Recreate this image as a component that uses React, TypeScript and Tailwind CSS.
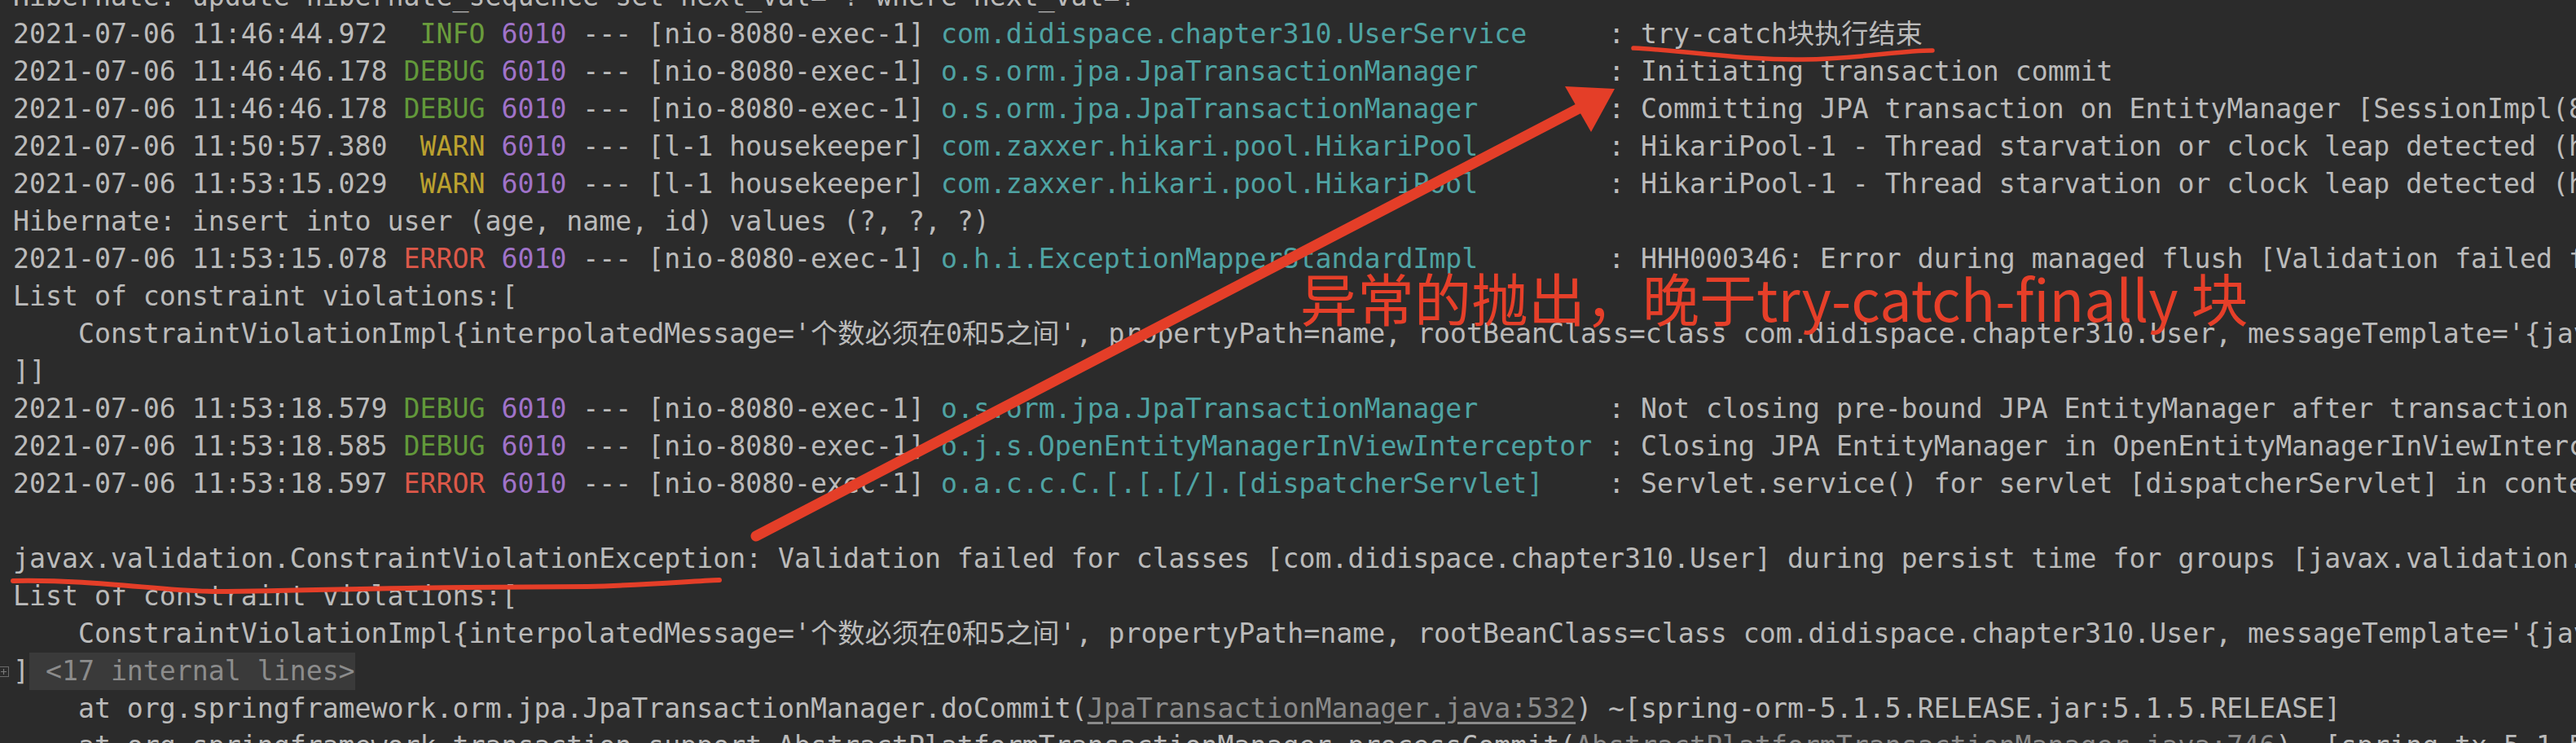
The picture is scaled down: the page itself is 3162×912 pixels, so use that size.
import type { ReactNode } from 'react';

type Seg = { t: string; c?: string };

const levelColor: Record<string, string> = {
    INFO: 'text-[#6a9c3c]',
    DEBUG: 'text-[#62993a]',
    WARN: 'text-[#bba12f]',
    ERROR: 'text-[#dc5849]',
};

const PID = 'text-[#a073c9]';
const LOGGER = 'text-[#4fa3a3]';
const LINK = 'text-[#8a8a8a] underline decoration-[#8a8a8a] underline-offset-[5px]';

function log(date: string, level: string, thread: string, logger: string, msg: string): Seg[] {
    return [
        { t: date + ' ' },
        { t: level.padStart(5), c: levelColor[level] },
        { t: ' ' },
        { t: '6010', c: PID },
        { t: ' --- [' + thread + '] ' },
        { t: logger.padEnd(40), c: LOGGER },
        { t: ' : ' + msg },
    ];
}

const violation =
    "    ConstraintViolationImpl{interpolatedMessage='个数必须在0和5之间', propertyPath=name, rootBeanClass=class com.didispace.chapter310.User, messageTemplate='{javax.validation.constraints.Max.message}'}";

const lines: (Seg[] | 'fold')[] = [
    [{ t: 'Hibernate: update hibernate_sequence set next_val= ? where next_val=?' }],
    log('2021-07-06 11:46:44.972', 'INFO', 'nio-8080-exec-1', 'com.didispace.chapter310.UserService', 'try-catch块执行结束'),
    log('2021-07-06 11:46:46.178', 'DEBUG', 'nio-8080-exec-1', 'o.s.orm.jpa.JpaTransactionManager', 'Initiating transaction commit'),
    log('2021-07-06 11:46:46.178', 'DEBUG', 'nio-8080-exec-1', 'o.s.orm.jpa.JpaTransactionManager', 'Committing JPA transaction on EntityManager [SessionImpl(891253345<open>)]'),
    log('2021-07-06 11:50:57.380', 'WARN', 'l-1 housekeeper', 'com.zaxxer.hikari.pool.HikariPool', 'HikariPool-1 - Thread starvation or clock leap detected (housekeeper delta=4m12s451ms).'),
    log('2021-07-06 11:53:15.029', 'WARN', 'l-1 housekeeper', 'com.zaxxer.hikari.pool.HikariPool', 'HikariPool-1 - Thread starvation or clock leap detected (housekeeper delta=2m17s649ms).'),
    [{ t: 'Hibernate: insert into user (age, name, id) values (?, ?, ?)' }],
    log('2021-07-06 11:53:15.078', 'ERROR', 'nio-8080-exec-1', 'o.h.i.ExceptionMapperStandardImpl', 'HHH000346: Error during managed flush [Validation failed for classes [com.didispace.chapter310.User] during persist time for groups [javax.validation.groups.Default, ]'),
    [{ t: 'List of constraint violations:[' }],
    [{ t: violation }],
    [{ t: ']]' }],
    log('2021-07-06 11:53:18.579', 'DEBUG', 'nio-8080-exec-1', 'o.s.orm.jpa.JpaTransactionManager', 'Not closing pre-bound JPA EntityManager after transaction completion'),
    log('2021-07-06 11:53:18.585', 'DEBUG', 'nio-8080-exec-1', 'o.j.s.OpenEntityManagerInViewInterceptor', 'Closing JPA EntityManager in OpenEntityManagerInViewInterceptor'),
    log('2021-07-06 11:53:18.597', 'ERROR', 'nio-8080-exec-1', 'o.a.c.c.C.[.[.[/].[dispatcherServlet]', 'Servlet.service() for servlet [dispatcherServlet] in context with path [] threw exception [Request processing failed; nested exception is org.springframework.transaction.TransactionSystemException: Could not commit JPA transaction] with root cause'),
    [{ t: '' }],
    [{ t: 'javax.validation.ConstraintViolationException: Validation failed for classes [com.didispace.chapter310.User] during persist time for groups [javax.validation.groups.Default, ]' }],
    [{ t: 'List of constraint violations:[' }],
    [{ t: violation }],
    'fold',
    [
        { t: '    at org.springframework.orm.jpa.JpaTransactionManager.doCommit(' },
        { t: 'JpaTransactionManager.java:532', c: LINK },
        { t: ') ~[spring-orm-5.1.5.RELEASE.jar:5.1.5.RELEASE]' },
    ],
    [
        { t: '    at org.springframework.transaction.support.AbstractPlatformTransactionManager.processCommit(' },
        { t: 'AbstractPlatformTransactionManager.java:746', c: LINK },
        { t: ') ~[spring-tx-5.1.5.RELEASE.jar:5.1.5.RELEASE]' },
    ],
];

function FoldIcon() {
    return (
        <span className="-ml-[2px] flex h-[13px] w-[13px] items-center justify-center border border-[#6a6a6a]">
            <svg width="9" height="9" viewBox="0 0 9 9">
                <path d="M1 4.5h7M4.5 1v7" stroke="#7a7a7a" strokeWidth="1.2" />
            </svg>
        </span>
    );
}

function Line({ gutter, children }: { gutter?: ReactNode; children: ReactNode }) {
    return (
        <div className="flex h-[46px] items-center">
            <div className="flex w-4 shrink-0 items-center">{gutter}</div>
            <div className="whitespace-pre">{children}</div>
        </div>
    );
}

export default function App() {
    return (
        <div className="relative h-[912px] w-[3162px] overflow-hidden bg-[#2b2b2b] font-['DejaVu_Sans_Mono','Noto_Sans_CJK_SC',monospace] text-[33.2px] leading-[46px] text-[#bbbbbb]">
            {/* console output */}
            <div className="mt-[-27px]">
                {lines.map((line, i) =>
                    line === 'fold' ? (
                        <Line key={i} gutter={<FoldIcon />}>
                            <span>]</span>
                            <span className="inline-block h-[46px] bg-[#3a3a3a] text-[#8c8c8c]"> &lt;17 internal lines&gt;</span>
                        </Line>
                    ) : (
                        <Line key={i}>
                            {line.map((s, j) => (
                                <span key={j} className={s.c}>
                                    {s.t}
                                </span>
                            ))}
                        </Line>
                    )
                )}
            </div>

            {/* red annotations */}
            <svg className="pointer-events-none absolute inset-0" width="3162" height="912" viewBox="0 0 3162 912">
                <path
                    d="M2005 59 C2080 63 2140 74 2213 73 S2330 62 2372 62"
                    fill="none"
                    stroke="#e43e28"
                    strokeWidth="5.5"
                    strokeLinecap="round"
                />
                <path
                    d="M16 713 C120 711 200 726 268 726 S500 721 574 721 L721 720 C800 718 850 713 883 712"
                    fill="none"
                    stroke="#e43e28"
                    strokeWidth="6"
                    strokeLinecap="round"
                />
                <line x1="928" y1="658" x2="1942" y2="131" stroke="#e43e28" strokeWidth="13" strokeLinecap="round" />
                <polygon points="1982,109 1921,106 1953,162" fill="#e43e28" />
            </svg>
            <div className="absolute left-[1596px] top-[330px] whitespace-pre font-['Noto_Sans_CJK_SC',sans-serif] text-[70px] leading-none text-[#e63f29]">
                异常的抛出，晚于try-catch-finally 块
            </div>
        </div>
    );
}
